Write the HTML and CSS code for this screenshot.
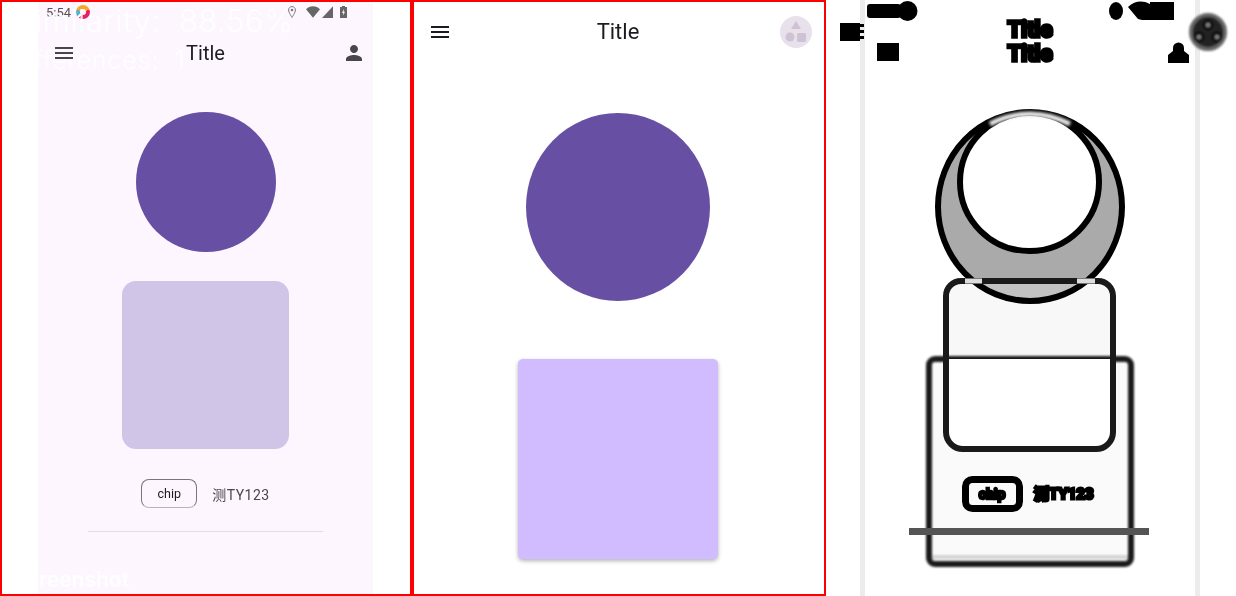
FILE: index.html
```html
<!DOCTYPE html>
<html lang="en">

<head>
    <meta charset="UTF-8">
    <meta name="viewport" content="width=device-width, initial-scale=1.0">
    <title>Screenshot compare</title>
    <link rel="stylesheet" href="styles.css">
</head>

<body>

    <!-- actual screenshot -->
    <section class="panel panel-actual">
        <div class="phone">
            <div class="status-bar">
                <div class="status-left">
                    <span class="clock">5:54</span>
                    <span class="app-logo"></span>
                </div>
                <div class="status-right">
                    <svg class="pin" viewBox="0 0 8 12"><path d="M4 .6C2 .6.6 2.1.6 4c0 2.4 3.4 7.4 3.4 7.4S7.400 6.400 7.400 4C7.400 2.100 6 .6 4 .6z" fill="none" stroke="#777" stroke-width="1"/><circle cx="4" cy="4" r="1.300" fill="#777"/></svg>
                    <svg class="wifi" viewBox="0 0 14 12"><path d="M0 3.200C1.800 1.300 4.300.2 7 .2s5.200 1.100 7 3L7 11.800z" fill="#666"/></svg>
                    <svg class="signal" viewBox="0 0 11 12"><path d="M11 .2V12H0z" fill="#666"/></svg>
                    <svg class="battery" viewBox="0 0 7 12"><path d="M2 0h3v1h2v11H0V1h2z" fill="#666"/><path d="M3.800 3 2 7h1.200v2.500L5 5.800H3.800z" fill="#fdf6ff"/></svg>
                </div>
            </div>
            <header class="app-bar">
                <svg class="icon menu-icon" viewBox="0 0 24 24"><path d="M3 18h18v-2H3v2zm0-5h18v-2H3v2zm0-7v2h18V6H3z"/></svg>
                <span class="app-title">Title</span>
                <svg class="icon person-icon" viewBox="0 0 24 24"><path d="M12 12c2.210 0 4-1.790 4-4s-1.790-4-4-4-4 1.790-4 4 1.790 4 4 4zm0 2c-2.670 0-8 1.340-8 4v2h16v-2c0-2.660-5.330-4-8-4z"/></svg>
            </header>
            <div class="big-circle"></div>
            <div class="soft-card"></div>
            <div class="chip-row">
                <span class="chip">chip</span>
                <span class="chip-label">测TY123</span>
            </div>
            <div class="divider"></div>
        </div>
        <p class="mark mark-similarity">Similarity: &nbsp;88.56%</p>
        <p class="mark mark-differences">Differences: &nbsp;1</p>
        <p class="mark mark-screenshot">Screenshot</p>
    </section>

    <!-- expected design -->
    <section class="panel panel-design">
        <header class="design-bar">
            <svg class="icon design-menu" viewBox="0 0 24 24"><path d="M3 18h18v-2H3v2zm0-5h18v-2H3v2zm0-7v2h18V6H3z"/></svg>
            <span class="design-title">Title</span>
            <span class="avatar">
                <svg viewBox="0 0 32 32"><path d="M16 5l5 8H11z"/><circle cx="10" cy="21" r="4.500"/><rect x="17" y="17" width="9" height="9" rx="1.500"/></svg>
            </span>
        </header>
        <div class="design-circle"></div>
        <div class="design-card"></div>
    </section>

    <!-- difference image: shapes sit where the mismatch is -->
    <section class="panel-diff">
        <svg class="diff-canvas" viewBox="0 0 410 596">
            <rect class="diff-strip" x="34" y="0" width="5" height="596"/>
            <rect class="diff-strip" x="369" y="0" width="5" height="596"/>

            <g class="diff-soft">
                <rect class="diff-black" x="41" y="4" width="34" height="14" rx="3"/>
                <circle class="diff-black" cx="81.500" cy="11" r="10"/>
                <ellipse class="diff-black" cx="290" cy="11" rx="7" ry="9"/>
                <path class="diff-black" d="M302 7q10-9 22-3V2h24v18H316l-4-1z"/>
                <rect class="diff-black" x="14" y="23" width="20" height="18"/>
                <path class="diff-black" d="M34 24h4v3h-4zm0 6h4v3h-4zm0 6h4v3h-4z"/>
                <rect class="diff-black" x="51" y="43" width="22" height="18"/>
                <path class="diff-black" d="M342 63V55l5-4v-3a5.500 5.500 0 0 1 11 0v3l5 4v8z"/>
                <text class="diff-title" x="204" y="37">Title</text>
                <text class="diff-title" x="204" y="61">Title</text>
            </g>

            <g class="diff-blur">
                <circle class="diff-avatar" cx="382" cy="32" r="17"/>
                <circle class="diff-dot" cx="382" cy="25" r="4"/>
                <circle class="diff-dot" cx="373" cy="37" r="4"/>
                <circle class="diff-dot" cx="391" cy="37" r="4"/>
            </g>

            <ellipse class="ring-fill" cx="204" cy="206.500" rx="92" ry="94.500"/>
            <rect class="back-card" x="120" y="281" width="167" height="168" rx="15"/>
            <path class="card-tint" d="M147.400 284A92 94.500 0 0 0 260.600 284z"/>
            <ellipse class="ring-inner" cx="203.500" cy="182" rx="69.500" ry="69"/>
            <ellipse class="ring-outer" cx="204" cy="206.500" rx="92" ry="94.500"/>
            <path class="ring-glint" d="M164 124Q204 104 244 124"/>
            <path class="card-glint" d="M139 281h17M251 281h18"/>

            <g class="diff-blur">
                <rect class="front-card" x="103" y="359" width="202" height="205" rx="6"/>
                <rect class="front-edge" x="106" y="555" width="196" height="4"/>
            </g>
            <g class="diff-soft">
                <path class="card-line" d="M120 359V432a17 17 0 0 0 17 17h133a17 17 0 0 0 17-17V359"/>
                <rect class="diff-chip" x="139.500" y="479.500" width="54" height="29" rx="7"/>
                <text class="diff-chip-text" x="166" y="499">chip</text>
                <text class="diff-label" x="208" y="499">测TY123</text>
                <rect class="diff-divider" x="83" y="528" width="240" height="7"/>
            </g>
        </svg>
    </section>

</body>

</html>
```

FILE: styles.css
```css
html,
body {
    margin: 0;
    height: 596px;
    overflow: hidden;
    background: white;
}

body {
    display: grid;
    grid-template-columns: 412px 414px 410px;
    font-family: Roboto, "Noto Sans CJK SC", sans-serif;
}

.panel {
    position: relative;
    box-sizing: border-box;
    height: 596px;
    border: 2px solid #f00;
    overflow: hidden;
    background: white;
}

.icon {
    display: block;
    width: 24px;
    height: 24px;
}

/* actual screenshot */
.phone {
    width: 335px;
    height: 592px;
    margin-left: 36px;
    display: flex;
    flex-direction: column;
    align-items: center;
    background: #fdf6ff;
}

.status-bar {
    align-self: stretch;
    height: 20px;
    padding: 0 26px 0 8px;
    display: flex;
    justify-content: space-between;
    align-items: center;
    filter: blur(0.3px);
}

.status-left,
.status-right {
    display: flex;
    align-items: center;
}

.clock {
    font-size: 13px;
    color: #555;
}

.app-logo {
    position: relative;
    width: 14px;
    height: 14px;
    margin-left: 5px;
    border-radius: 50%;
    background: conic-gradient(#f9a825 0 70deg, #e91e63 70deg 215deg, #fdf6ff 215deg 235deg, #4db6d0 235deg 290deg, #f9a825 290deg);
}

.app-logo::after {
    content: "";
    position: absolute;
    left: 4px;
    top: 4px;
    width: 6px;
    height: 6px;
    border-radius: 50%;
    background: #fdf6ff;
}

.pin {
    width: 8px;
    height: 12px;
    margin-right: 10px;
}

.wifi {
    width: 14px;
    height: 12px;
    margin-right: 2px;
}

.signal {
    width: 11px;
    height: 12px;
    margin-right: 7px;
}

.battery {
    width: 7px;
    height: 12px;
}

.app-bar {
    position: relative;
    z-index: 1;
    align-self: stretch;
    height: 48px;
    margin-top: 7px;
    padding: 0 7px;
    display: grid;
    grid-template-columns: 1fr auto 1fr;
    align-items: center;
    fill: #49454f;
    filter: blur(0.3px);
}

.menu-icon {
    margin-left: 7px;
}

.person-icon {
    justify-self: end;
}

.app-title {
    font-size: 20px;
    color: #1d1b20;
}

.big-circle {
    width: 140px;
    height: 140px;
    margin-top: 35px;
    border-radius: 50%;
    background: #674fa3;
}

.soft-card {
    width: 167px;
    height: 168px;
    margin-top: 29px;
    border-radius: 14px;
    background: #d0c4e7;
}

.chip-row {
    display: flex;
    align-items: center;
    gap: 15px;
    margin-top: 30px;
    filter: blur(0.3px);
}

.chip {
    box-sizing: border-box;
    width: 56px;
    height: 29px;
    border: 1px solid #79747e;
    border-bottom-color: #b9b3c0;
    border-radius: 8px;
    text-align: center;
    line-height: 27px;
    font-size: 12.500px;
    color: #1d1b20;
}

.chip-label {
    font-size: 14px;
    letter-spacing: 0.5px;
    color: #49454f;
}

.divider {
    width: 235px;
    height: 1px;
    margin-top: 23px;
    background: #e2dce5;
}

.mark {
    position: absolute;
    margin: 0;
    white-space: nowrap;
    font-family: Inter, sans-serif;
    color: rgba(255, 255, 255, 0.9);
}

.mark-similarity {
    left: 13px;
    top: 0;
    font-size: 31px;
    font-weight: 300;
    letter-spacing: 0.5px;
}

.mark-differences {
    left: 7px;
    top: 43px;
    font-size: 25px;
    font-weight: 300;
    letter-spacing: 0.8px;
}

.mark-screenshot {
    left: 11px;
    top: 565px;
    font-size: 21px;
    font-weight: 600;
}

/* expected design */
.design-bar {
    height: 48px;
    margin-top: 6px;
    padding: 0 12px 0 14px;
    display: grid;
    grid-template-columns: 1fr auto 1fr;
    align-items: center;
    fill: #1d1b20;
    filter: blur(0.3px);
}

.design-title {
    font-size: 22px;
    color: #1d1b20;
    margin-top: -2px;
    margin-right: 4px;
}

.avatar {
    justify-self: end;
    display: block;
    width: 32px;
    height: 32px;
    border-radius: 50%;
    background: #e8e0eb;
    fill: #cdc3d4;
}

.avatar svg {
    display: block;
}

.design-circle {
    width: 184px;
    height: 188px;
    margin: 57px 0 0 112px;
    border-radius: 50%;
    background: #674fa3;
}

.design-card {
    width: 200px;
    height: 200px;
    margin: 58px 0 0 104px;
    border-radius: 5px;
    background: #d0bcff;
    box-shadow: 0 2px 4px rgba(0, 0, 0, 0.3);
}

/* difference image */
.panel-diff {
    height: 596px;
    overflow: hidden;
}

.diff-canvas {
    display: block;
    width: 410px;
    height: 596px;
}

.diff-strip {
    fill: #ececec;
}

.diff-soft {
    filter: blur(0.5px);
}

.diff-blur {
    filter: blur(1px);
}

.diff-black {
    fill: #000;
}

.diff-avatar {
    fill: #222;
    stroke: #666;
    stroke-width: 4;
}

.diff-dot {
    fill: #777;
    stroke: #000;
    stroke-width: 2;
}

.diff-title {
    font-size: 22px;
    font-weight: bold;
    text-anchor: middle;
    fill: #000;
    stroke: #000;
    stroke-width: 3.500;
}

.ring-fill {
    fill: #aaa;
}

.ring-outer {
    fill: none;
    stroke: #000;
    stroke-width: 6;
}

.ring-inner {
    fill: white;
    stroke: #000;
    stroke-width: 6;
}

.ring-glint {
    fill: none;
    stroke: #eee;
    stroke-width: 5;
    filter: blur(1.500px);
}

.card-glint {
    fill: none;
    stroke: #ddd;
    stroke-width: 5;
    filter: blur(0.7px);
}

.card-tint {
    fill: #c2c2c2;
}

.back-card {
    fill: #f8f8f8;
    stroke: #1a1a1a;
    stroke-width: 6;
}

.front-card {
    fill: #fafafa;
    stroke: #1a1a1a;
    stroke-width: 6;
}

.front-edge {
    fill: #d4d4d4;
}

.card-line {
    fill: white;
    stroke: #1a1a1a;
    stroke-width: 6;
}

.diff-chip {
    fill: #fafafa;
    stroke: #000;
    stroke-width: 7;
}

.diff-chip-text {
    font-size: 14px;
    font-weight: bold;
    text-anchor: middle;
    fill: #000;
    stroke: #000;
    stroke-width: 2.500;
}

.diff-label {
    font-size: 15px;
    font-weight: bold;
    fill: #000;
    stroke: #000;
    stroke-width: 3;
}

.diff-divider {
    fill: #555;
}
```
